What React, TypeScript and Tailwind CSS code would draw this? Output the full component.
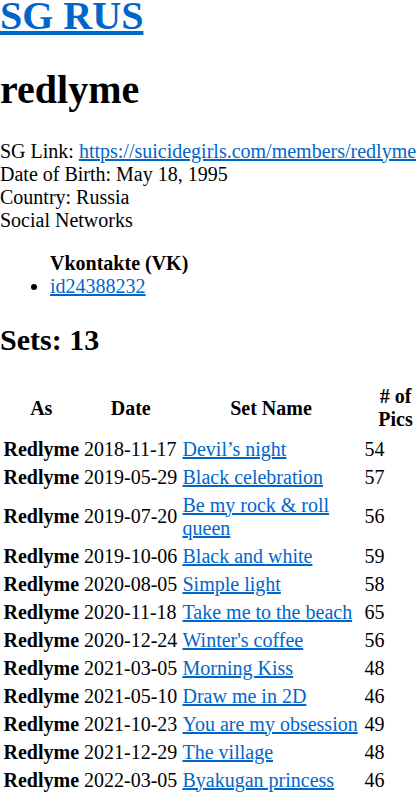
const SETS = [
  { date: '2018-11-17', name: 'Devil’s night', pics: 54 },
  { date: '2019-05-29', name: 'Black celebration', pics: 57 },
  { date: '2019-07-20', name: 'Be my rock & roll queen', pics: 56 },
  { date: '2019-10-06', name: 'Black and white', pics: 59 },
  { date: '2020-08-05', name: 'Simple light', pics: 58 },
  { date: '2020-11-18', name: 'Take me to the beach', pics: 65 },
  { date: '2020-12-24', name: "Winter's coffee", pics: 56 },
  { date: '2021-03-05', name: 'Morning Kiss', pics: 48 },
  { date: '2021-05-10', name: 'Draw me in 2D', pics: 46 },
  { date: '2021-10-23', name: 'You are my obsession', pics: 49 },
  { date: '2021-12-29', name: 'The village', pics: 48 },
  { date: '2022-03-05', name: 'Byakugan princess', pics: 46 },
];

const link = 'text-[#0066cc] underline';

export default function App() {
  return (
    <div className="h-[793px] w-[418px] overflow-hidden bg-white text-black font-['Liberation_Serif',serif] text-[20px] leading-[normal]">
      {/* Header */}
      <h1 className="text-[40px] font-bold mt-[-8px] mb-[26.8px]">
        <a href="#" className={link}>SG RUS</a>
      </h1>
      <h1 className="text-[40px] font-bold mb-[26.8px]">redlyme</h1>

      {/* Profile info */}
      <div>
        SG Link: <a href="#" className={link}>https://suicidegirls.com/members/redlyme</a>
        <br />
        Date of Birth: May 18, 1995
        <br />
        Country: Russia
        <br />
        Social Networks
      </div>
      <ul className="my-[20px] pl-[50px] list-disc">
        <li className="list-none font-bold">Vkontakte (VK)</li>
        <li>
          <a href="#" className={link}>id24388232</a>
        </li>
      </ul>

      <h2 className="text-[30px] font-bold my-[25px]">Sets: 13</h2>

      {/* Sets table */}
      <table className="table-fixed border-separate border-spacing-[2px] w-[430px] leading-[23px]">
        <thead>
          <tr>
            <th className="w-[78.5px] px-[1.5px] pt-[1.5px] pb-[3px] font-bold text-center">As</th>
            <th className="w-[96.5px] px-[1.5px] pt-[1.5px] pb-[3px] font-bold text-center">Date</th>
            <th className="w-[180px] px-[1.5px] pt-[1.5px] pb-[3px] font-bold text-center">Set Name</th>
            <th className="w-[65px] px-[1.5px] pt-[1.5px] pb-[3px] font-bold text-center"># of Pics</th>
          </tr>
        </thead>
        <tbody>
          {SETS.map((s) => (
            <tr key={s.date}>
              <td className="p-[1.5px] font-bold align-middle whitespace-nowrap">Redlyme</td>
              <td className="p-[1.5px] align-middle whitespace-nowrap">{s.date}</td>
              <td className="p-[1.5px] align-middle">
                <a href="#" className={link}>{s.name}</a>
              </td>
              <td className="p-[1.5px] align-middle">{s.pics}</td>
            </tr>
          ))}
        </tbody>
      </table>
    </div>
  );
}
